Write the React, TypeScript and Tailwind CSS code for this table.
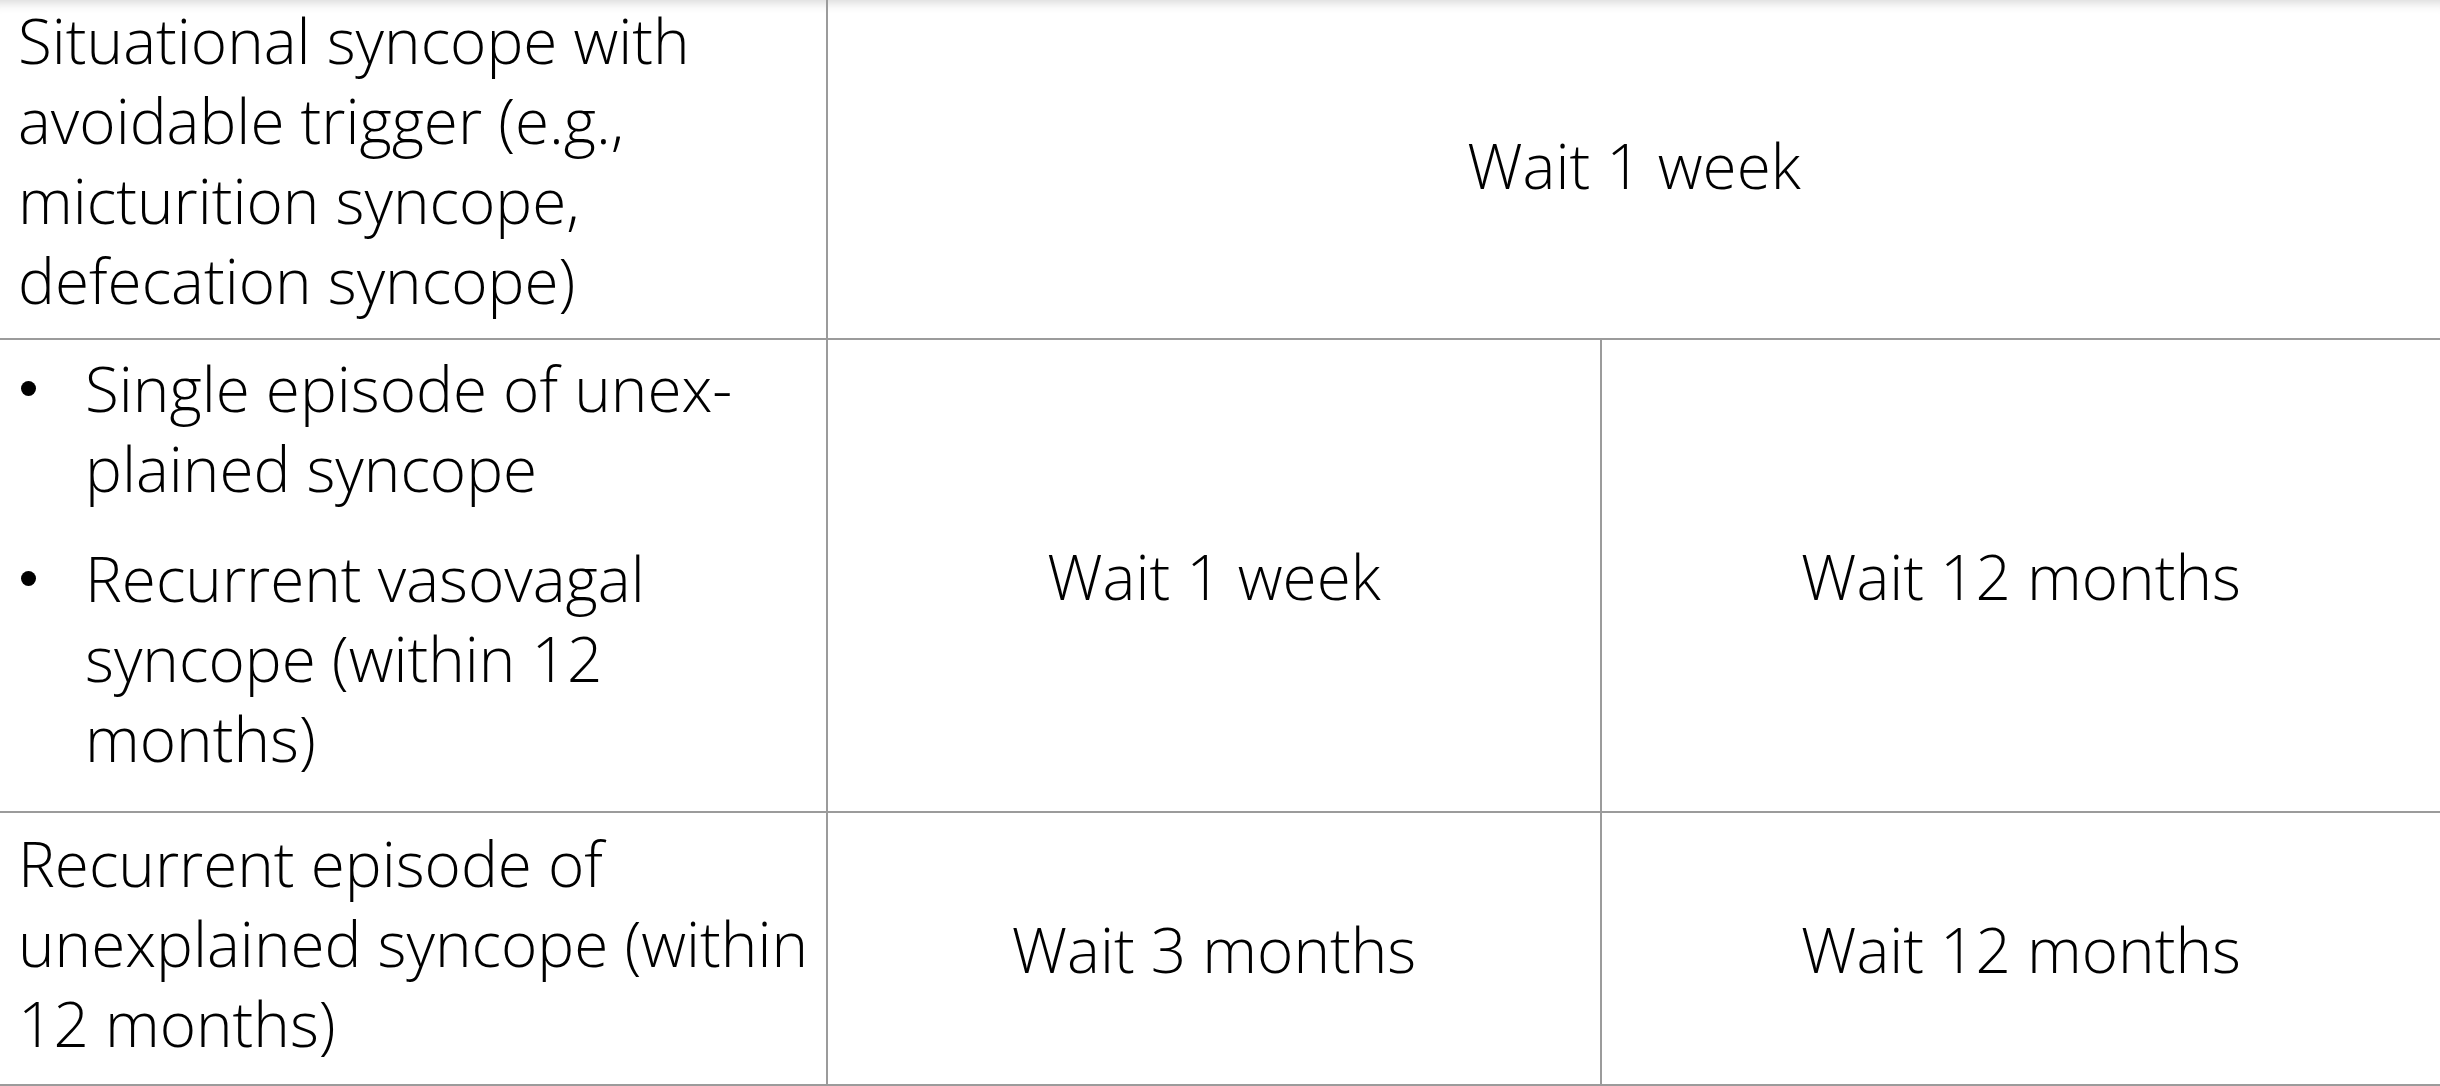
const rows = [
  {
    label: (
      <>
        Situational syncope with
        <br />
        avoidable trigger (e.g.,
        <br />
        micturition syncope,
        <br />
        defecation syncope)
      </>
    ),
  },
];

const Bullet = ({ children }: { children: React.ReactNode }) => (
  <li className="flex">
    <div className="w-[85px] h-[80px] shrink-0 flex items-center pl-[21px]">
      <span className="block w-[15px] h-[15px] rounded-full bg-black" />
    </div>
    <div>{children}</div>
  </li>
);

export default function App() {
  return (
    <div
      className="w-[2440px] h-[1086px] overflow-hidden bg-white text-black font-light text-[62px] leading-[80px] shadow-[inset_0_14px_12px_-12px_rgba(0,0,0,0.18)]"
      style={{ fontFamily: '"Open Sans", "Noto Sans", sans-serif' }}
    >
      <table className="-mt-[10px] table-fixed border-collapse w-[2442px]">
        <colgroup>
          <col className="w-[827px]" />
          <col className="w-[774px]" />
          <col />
        </colgroup>
        <tbody>
          <tr className="h-[348px]">
            <td className="border-2 border-[#9b9b9b] border-l-0 align-top pl-[18px] pt-[8px]">
              {rows[0].label}
            </td>
            <td
              colSpan={2}
              className="border-2 border-[#9b9b9b] text-center align-middle"
            >
              Wait 1 week
            </td>
          </tr>
          <tr className="h-[473px]">
            <td className="border-2 border-[#9b9b9b] border-l-0 align-top pt-[8px]">
              <ul className="flex flex-col gap-[30px]">
                <Bullet>
                  Single episode of unex-
                  <br />
                  plained syncope
                </Bullet>
                <Bullet>
                  Recurrent vasovagal
                  <br />
                  syncope (within 12
                  <br />
                  months)
                </Bullet>
              </ul>
            </td>
            <td className="border-2 border-[#9b9b9b] text-center align-middle">
              Wait 1 week
            </td>
            <td className="border-2 border-[#9b9b9b] text-center align-middle">
              Wait 12 months
            </td>
          </tr>
          <tr className="h-[273px]">
            <td className="border-2 border-[#9b9b9b] border-l-0 align-top pl-[18px] pt-[10px]">
              Recurrent episode of
              <br />
              unexplained syncope (within
              <br />
              12 months)
            </td>
            <td className="border-2 border-[#9b9b9b] text-center align-middle">
              Wait 3 months
            </td>
            <td className="border-2 border-[#9b9b9b] text-center align-middle">
              Wait 12 months
            </td>
          </tr>
        </tbody>
      </table>
    </div>
  );
}
